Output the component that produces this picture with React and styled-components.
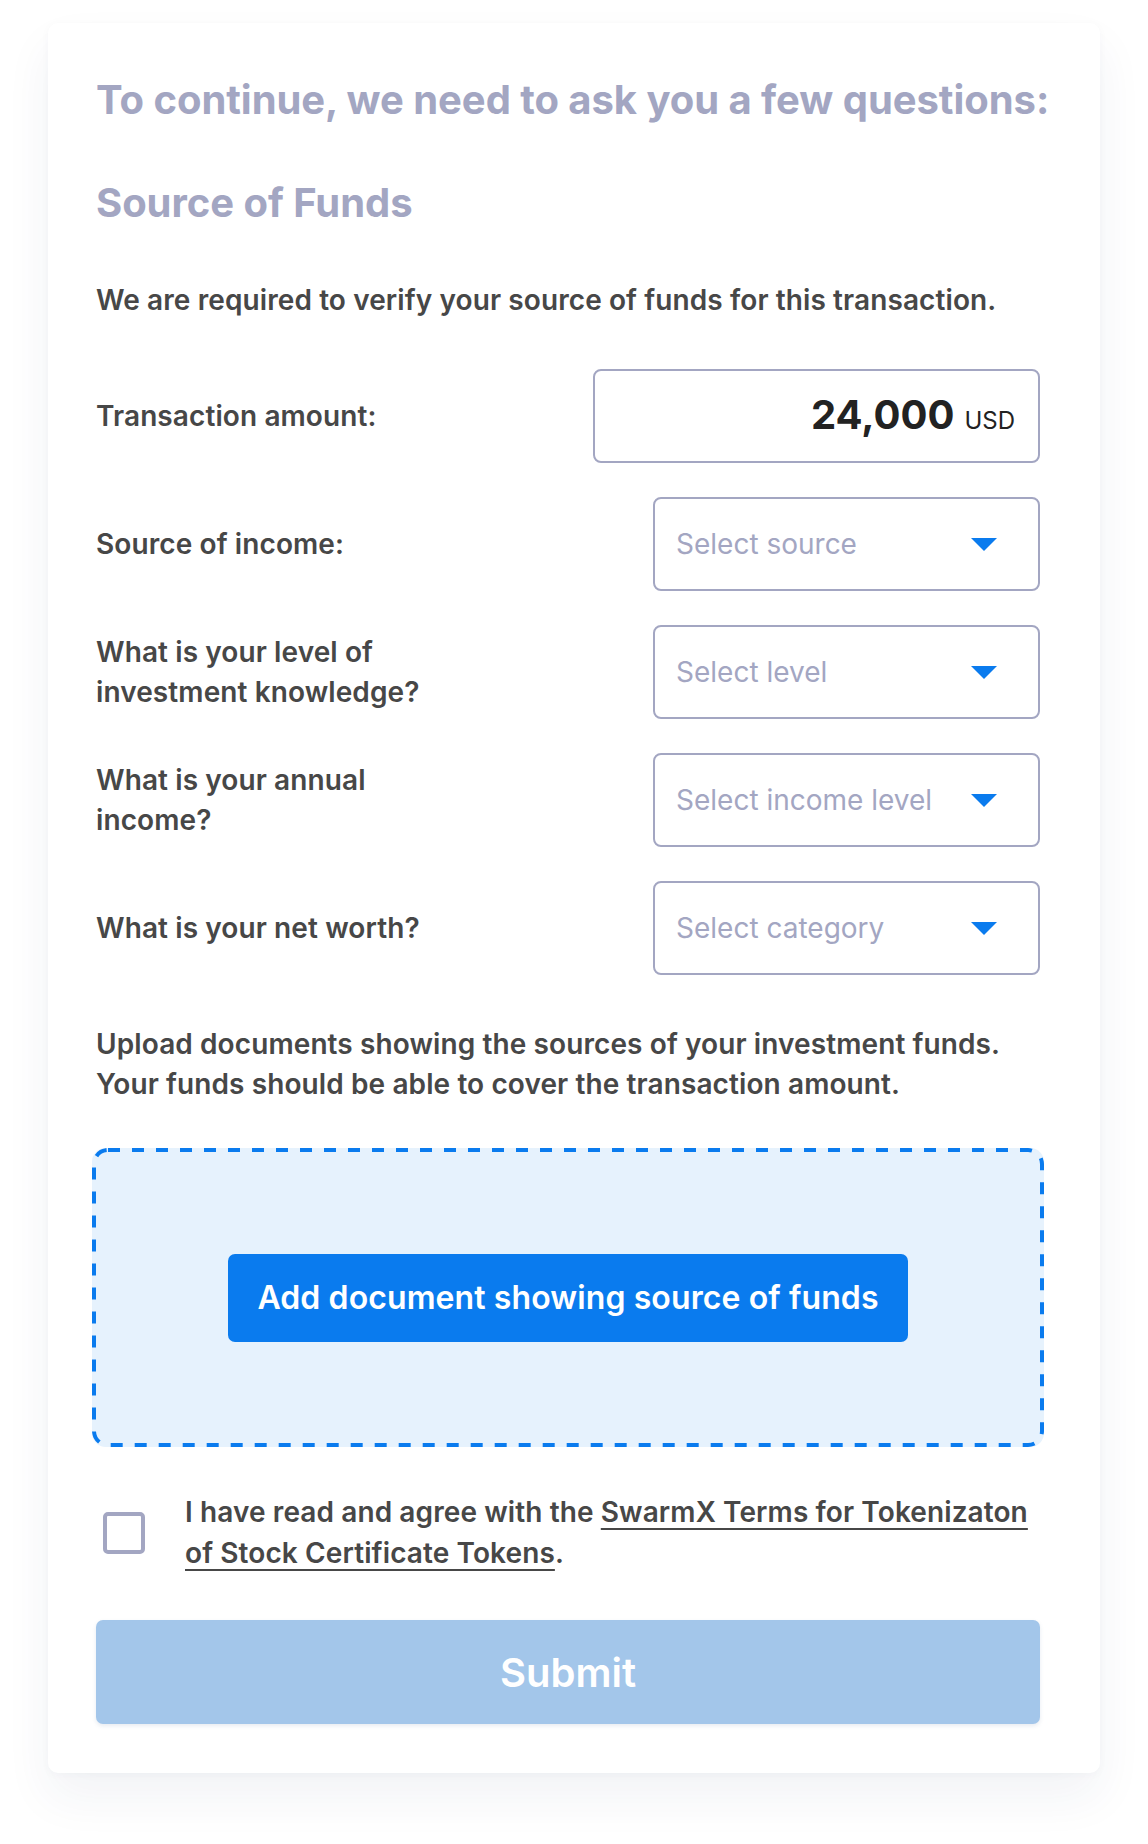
import React from "react";
import styled, { createGlobalStyle } from "styled-components";

const Global = createGlobalStyle`
  html, body { margin: 0; padding: 0; background: #ffffff; }
  body { font-family: Inter, "Noto Sans", "Liberation Sans", sans-serif; -webkit-font-smoothing: antialiased; }
  * { box-sizing: border-box; }
`;

const Page = styled.div`
  padding: 23px 48px 72px 48px;
`;

const Card = styled.div`
  width: 1052px;
  background: #ffffff;
  border-radius: 10px;
  box-shadow: 0 24px 48px rgba(40, 50, 110, 0.06), 0 2px 10px rgba(40, 50, 110, 0.03);
  padding: 54px 60px 49px 48px;
  display: flex;
  flex-direction: column;
`;

const Title = styled.h1`
  margin: 0;
  font-size: 40px;
  line-height: 46px;
  font-weight: 700;
  color: #a3a6c2;
  letter-spacing: -0.05px;
  white-space: nowrap;
`;

const Subtitle = styled(Title).attrs({ as: "h2" })`
  margin-top: 57px;
`;

const Text = styled.p`
  margin: ${(p) => p.$mt || 0}px 0 0 0;
  font-size: 28px;
  line-height: 40px;
  font-weight: 600;
  letter-spacing: 0.1px;
  color: #474747;
`;

const Rows = styled.div`
  margin-top: 49px;
  display: flex;
  flex-direction: column;
  gap: 34px;
`;

const Row = styled.div`
  display: flex;
  align-items: center;
  justify-content: space-between;
  height: 94px;
`;

const Label = styled.div`
  max-width: 360px;
  font-size: 28px;
  line-height: 40px;
  font-weight: 600;
  letter-spacing: 0.1px;
  color: #474747;
`;

const Box = styled.div`
  width: ${(p) => p.$w}px;
  height: 94px;
  border: 2px solid #a3a6c2;
  border-radius: 8px;
  display: flex;
  align-items: center;
`;

const AmountBox = styled(Box)`
  justify-content: flex-end;
  padding-right: 23px;
  gap: 10px;
  align-items: baseline;
  padding-top: 20px;
`;

const Amount = styled.span`
  font-size: 40px;
  font-weight: 700;
  color: #222222;
  line-height: 48px;
`;

const Currency = styled.span`
  font-size: 24px;
  font-weight: 400;
  color: #222222;
`;

const SelectBox = styled(Box)`
  justify-content: space-between;
  padding: 0 41px 0 21px;
  cursor: pointer;
`;

const Placeholder = styled.span`
  font-size: 28px;
  font-weight: 400;
  color: #a3a6c2;
`;

const Caret = () => (
  <svg width="26" height="13" viewBox="0 0 26 13" aria-hidden="true">
    <path d="M0 0 H26 L13 13 Z" fill="#0a7bee" />
  </svg>
);

const dashSvg = encodeURIComponent(
  "<svg xmlns='http://www.w3.org/2000/svg' width='952' height='299'><rect x='2' y='2' width='948' height='295' rx='14' ry='14' fill='none' stroke='#0a7bee' stroke-width='4' stroke-dasharray='12 12'/></svg>"
);

const DropZone = styled.div`
  margin: 44px -4px 0 -4px;
  height: 299px;
  border-radius: 14px;
  background-color: #e6f2fd;
  background-image: url("data:image/svg+xml,${dashSvg}");
  background-repeat: no-repeat;
  background-size: 100% 100%;
  display: flex;
  align-items: center;
  justify-content: center;
`;

const AddButton = styled.button`
  width: 680px;
  height: 88px;
  border: none;
  border-radius: 7px;
  background: #0a7bee;
  color: #ffffff;
  font-family: inherit;
  font-size: 32px;
  font-weight: 600;
  letter-spacing: 0.1px;
  cursor: pointer;
`;

const Agree = styled.label`
  margin-top: 45px;
  display: flex;
  align-items: center;
  gap: 40px;
  padding-left: 7px;
`;

const CheckBox = styled.span`
  flex: none;
  width: 42px;
  height: 42px;
  border: 4px solid #a3a6c2;
  border-radius: 5px;
  background: #fff;
`;

const AgreeText = styled.span`
  font-size: 28px;
  line-height: 41px;
  font-weight: 600;
  letter-spacing: 0.1px;
  color: #474747;
`;

const TermsLink = styled.a`
  color: #474747;
  text-decoration: underline;
  text-decoration-thickness: 2px;
  text-underline-offset: 6px;
`;

const Submit = styled.button`
  margin-top: 46px;
  width: 100%;
  height: 104px;
  border: none;
  border-radius: 7px;
  background: #a3c6ea;
  color: #ffffff;
  font-family: inherit;
  font-size: 40px;
  font-weight: 600;
  box-shadow: 0 2px 4px rgba(60, 90, 140, 0.12);
`;

const questions = [
  { label: "Source of income:", placeholder: "Select source" },
  { label: "What is your level of investment knowledge?", placeholder: "Select level" },
  { label: "What is your annual income?", placeholder: "Select income level" },
  { label: "What is your net worth?", placeholder: "Select category" },
];

export default function App() {
  return (
    <>
      <Global />
      <Page>
        <Card>
          <Title>To continue, we need to ask you a few questions:</Title>
          <Subtitle>Source of Funds</Subtitle>
          <Text $mt={54}>We are required to verify your source of funds for this transaction.</Text>
          <Rows>
            <Row>
              <Label>Transaction amount:</Label>
              <AmountBox $w={447}>
                <Amount>24,000</Amount>
                <Currency>USD</Currency>
              </AmountBox>
            </Row>
            {questions.map((q) => (
              <Row key={q.label}>
                <Label>{q.label}</Label>
                <SelectBox $w={387}>
                  <Placeholder>{q.placeholder}</Placeholder>
                  <Caret />
                </SelectBox>
              </Row>
            ))}
          </Rows>
          <Text $mt={49}>
            Upload documents showing the sources of your investment funds.
            <br />
            Your funds should be able to cover the transaction amount.
          </Text>
          <DropZone>
            <AddButton>Add document showing source of funds</AddButton>
          </DropZone>
          <Agree>
            <CheckBox />
            <AgreeText>
              I have read and agree with the{" "}
              <TermsLink href="#">SwarmX Terms for Tokenizaton of Stock Certificate Tokens</TermsLink>.
            </AgreeText>
          </Agree>
          <Submit>Submit</Submit>
        </Card>
      </Page>
    </>
  );
}
